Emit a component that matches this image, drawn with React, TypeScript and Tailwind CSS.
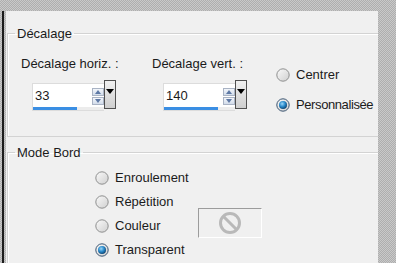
import React from "react";

const font = "font-['Liberation_Sans',Arial,sans-serif] text-[13px] leading-[15px] text-[#1b1b1b]";

function Radio({ checked, label, tight }: { checked?: boolean; label: string; tight?: boolean }) {
    return (
        <div className="flex items-center h-[15px]">
            <svg width="14" height="14" viewBox="0 0 14 14" className="shrink-0">
                <defs>
                    <linearGradient id="rOff" x1="0" y1="0" x2="1" y2="1">
                        <stop offset="0" stopColor="#fafafa" />
                        <stop offset="1" stopColor="#cfcfcf" />
                    </linearGradient>
                    <radialGradient id="rOn" cx="0.4" cy="0.35" r="0.7">
                        <stop offset="0" stopColor="#9bd6f7" />
                        <stop offset="0.5" stopColor="#2b8bcc" />
                        <stop offset="1" stopColor="#0a3f6b" />
                    </radialGradient>
                </defs>
                <circle cx="7" cy="7" r="6.2" fill="url(#rOff)" stroke={checked ? "#3b5571" : "#8e8f8f"} strokeWidth="1" />
                {checked && <circle cx="7" cy="7" r="4" fill="url(#rOn)" />}
            </svg>
            <span className={tight ? "ml-[6px] whitespace-nowrap tracking-[-0.4px]" : "ml-[6px] whitespace-nowrap"}>{label}</span>
        </div>
    );
}

function SpinField({ value, barClass }: { value: string; barClass: string }) {
    return (
        <div className="flex items-start ml-[11px] mt-[9px]">
            <div className="w-[72px] h-[28px] mt-[3px] bg-white border border-[#dcdcdc] border-r-0 flex flex-col">
                <div className="flex-1 flex items-start justify-between">
                    <span className="pl-[2px] pt-[4px]">{value}</span>
                    <div className="flex flex-col gap-[1px] pt-[4px]">
                        <div className="w-[12px] h-[8px] border border-[#a9b3c4] bg-[linear-gradient(#f3f6fb,#d2dcea)] flex items-center justify-center">
                            <div className="w-0 h-0 border-l-[3px] border-r-[3px] border-b-[4px] border-l-transparent border-r-transparent border-b-[#5d78a5]" />
                        </div>
                        <div className="w-[12px] h-[8px] border border-[#a9b3c4] bg-[linear-gradient(#f3f6fb,#d2dcea)] flex items-center justify-center">
                            <div className="w-0 h-0 border-l-[3px] border-r-[3px] border-t-[4px] border-l-transparent border-r-transparent border-t-[#5d78a5]" />
                        </div>
                    </div>
                </div>
                <div className="h-[3px] bg-[#ececec]">
                    <div className={`h-full bg-[#3a8ee3] ${barClass}`} />
                </div>
            </div>
            <div className="w-[12px] h-[29px] border border-[#505050] bg-[linear-gradient(#f0f0f0,#cfcfcf)] flex justify-center pt-[8px]">
                <div className="w-0 h-0 border-l-[4px] border-r-[4px] border-t-[5px] border-l-transparent border-r-transparent border-t-black" />
            </div>
        </div>
    );
}

export default function App() {
    const pattern = "bg-[#bcbcbc] bg-[image:repeating-conic-gradient(#aeaeae_0%_25%,#c9c9c9_0%_50%)] bg-[length:2px_2px]";
    return (
        <div className={`w-[396px] h-[263px] overflow-hidden flex flex-col ${pattern} ${font}`}>
            <div className="h-[11px] shrink-0" />
            <div className="flex flex-1 min-h-0">
                <div className="w-[6px] shrink-0 flex">
                    <div className="w-[2px]" />
                    <div className="w-[2px] bg-[#1c1c1c]" />
                </div>
                <div className="w-[372px] bg-[#f0f0f0] overflow-hidden flex flex-col">
                    {/* Décalage */}
                    <fieldset className="ml-[1px] mr-[-6px] mt-[15px] h-[111px] shrink-0 border border-[#d3d3d3] shadow-[inset_1px_1px_0_#ffffff] pl-[7px]">
                        <legend className="px-[2px]">Décalage</legend>
                        <div className="flex pl-[6px] pt-[15px]">
                            <div className="w-[131px]">
                                <div>Décalage horiz. :</div>
                                <SpinField value="33" barClass="w-[44px]" />
                            </div>
                            <div className="w-[124px]">
                                <div>Décalage vert. :</div>
                                <SpinField value="140" barClass="w-[54px]" />
                            </div>
                            <div className="flex flex-col gap-[15px] pt-[11px]">
                                <Radio label="Centrer" />
                                <Radio checked tight label="Personnalisée" />
                            </div>
                        </div>
                    </fieldset>

                    {/* Mode Bord */}
                    <fieldset className="ml-[1px] mr-[-6px] mt-[8px] h-[140px] shrink-0 border border-[#d3d3d3] shadow-[inset_1px_1px_0_#ffffff] pl-[7px]">
                        <legend className="px-[2px]">Mode Bord</legend>
                        <div className="flex flex-col gap-[9px] pl-[80px] pt-[10px]">
                            <Radio label="Enroulement" />
                            <Radio label="Répétition" />
                            <div className="flex items-start h-[15px]">
                                <div className="w-[103px]">
                                    <Radio label="Couleur" />
                                </div>
                                <div className="w-[64px] h-[30px] shrink-0 mt-[-10px] border border-t-[#9c9c9c] border-l-[#9c9c9c] border-r-white border-b-white bg-[#f0f0f0] flex items-center justify-center">
                                    <svg width="24" height="24" viewBox="0 0 24 24">
                                        <circle cx="12" cy="12" r="9.5" fill="none" stroke="#b9b9b9" strokeWidth="3" />
                                        <line x1="5.5" y1="5.5" x2="18.5" y2="18.5" stroke="#b9b9b9" strokeWidth="3" />
                                    </svg>
                                </div>
                            </div>
                            <Radio checked label="Transparent" />
                        </div>
                    </fieldset>
                </div>
            </div>
        </div>
    );
}
